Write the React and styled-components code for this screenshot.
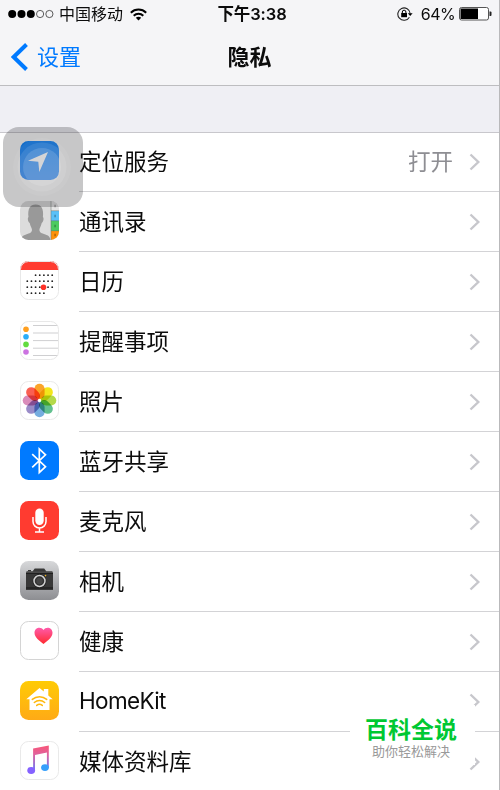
import React from 'react';
import styled, { createGlobalStyle } from 'styled-components';

const GlobalStyle = createGlobalStyle`
  * {
    box-sizing: border-box;
  }

  body {
    margin: 0;
    background: #fff;
    overflow: hidden;
    font-family: Inter, 'Noto Sans CJK SC', sans-serif;
    color: #0c0c0c;
  }

  svg {
    display: block;
  }
`;

const items = [
  { title: '定位服务', icon: 'location', value: '打开' },
  { title: '通讯录', icon: 'contacts' },
  { title: '日历', icon: 'calendar' },
  { title: '提醒事项', icon: 'reminders' },
  { title: '照片', icon: 'photos' },
  { title: '蓝牙共享', icon: 'bluetooth' },
  { title: '麦克风', icon: 'microphone' },
  { title: '相机', icon: 'camera' },
  { title: '健康', icon: 'health' },
  { title: 'HomeKit', icon: 'homekit', latin: true },
  { title: '媒体资料库', icon: 'media' }
];

const petals = [
  '#fba42a', '#f3e61c', '#b4d94a', '#62c08f',
  '#76addf', '#9a8cc8', '#d98cba', '#fa5f52'
];

// first day column, number of days
const weeks = [[2, 5], [0, 7], [0, 7], [0, 5]];

// Every drawing lives on a 39x39 tile
const drawings = {
  location: (
    <>
      <rect width="39" height="39" fill="url(#blue)" />
      <path d="M28 11L8 19.700l10.300 1 1 10.400z" fill="#fff" />
    </>
  ),
  contacts: (
    <>
      <rect width="39" height="39" fill="#dcdcdc" />
      <path
        d="M1 39c.5-3.500 2-4.500 5-5.500 4-1.300 5.800-2 6-4.500.1-1.500-1.500-3.200-2.300-7-1.700-.8-2.500-5-1.200-6C7.500 8 10 3.500 15.700 3.500S23.900 8 22.900 16c1.300 1 .5 5.200-1.200 6-.8 3.800-2.400 5.500-2.300 7 .2 2.500 2 3.200 6 4.500 3 1 4.500 2 5 5.500z"
        fill="#999"
      />
      <rect x="31" width="8" height="10" fill="#e4e4e4" />
      <rect x="31" y="10" width="8" height="10" fill="#5ac1f8" />
      <rect x="31" y="20" width="8" height="10" fill="#4ccb60" />
      <rect x="31" y="30" width="8" height="9" fill="#ff9208" />
      <path d="M31 0v39M31 9.700h8M31 19.700h8M31 29.700h8" stroke="#6a756c" strokeWidth=".5" />
      <path d="M34.200 5h1.800M34.200 15H36M34.200 25H36M34.200 34H36" stroke="#000" strokeOpacity=".25" strokeWidth="2.500" />
    </>
  ),
  calendar: (
    <>
      <rect width="39" height="9" fill="#ff3b30" />
      {weeks.map(([start, count], row) =>
        Array.from({ length: count }, (_, i) => (
          <circle
            key={`${row}-${i}`}
            cx={7.3 + (start + i) * 4.15}
            cy={14.2 + row * 6}
            r=".9"
            fill="#222"
          />
        ))
      )}
      <circle cx="23.500" cy="26.200" r="2.800" fill="#ff3127" />
    </>
  ),
  reminders: (
    <>
      <path
        d="M13 4.500h26M13 12h26M13 19.600h26M13 27.200h26M13 34.500h26"
        stroke="#cfcfd1"
        strokeWidth="1"
      />
      <circle cx="6" cy="8.200" r="2.800" fill="#ff9f1f" />
      <circle cx="6" cy="15.800" r="2.800" fill="#2badf8" />
      <circle cx="6" cy="23.400" r="2.800" fill="#63dc3f" />
      <circle cx="6" cy="31" r="2.800" fill="#cc73e1" />
    </>
  ),
  photos: (
    <g style={{ isolation: 'isolate' }}>
      {petals.map((color, i) => (
        <rect
          key={color}
          x="14.400"
          y="2.700"
          width="10.200"
          height="15.400"
          rx="5.100"
          fill={color}
          transform={`rotate(${i * 45} 19.5 19.5)`}
          style={{ mixBlendMode: 'multiply' }}
        />
      ))}
      <circle cx="19.500" cy="19.500" r="1.400" fill="#fff" />
    </g>
  ),
  bluetooth: (
    <>
      <rect width="39" height="39" fill="#007aff" />
      <path
        d="M12.200 13.200l13.300 12.500-6.200 5.800V8l6.200 5.800-13.300 12.500"
        fill="none"
        stroke="#fff"
        strokeWidth="1.700"
      />
    </>
  ),
  microphone: (
    <>
      <rect width="39" height="39" fill="#ff3b30" />
      <rect x="15.300" y="7.500" width="8.400" height="16.500" rx="4.200" fill="#fff" />
      <path
        d="M13 16v4.500a6.500 6.500 0 0 0 13 0V16M19.500 27v4M15 31h9"
        fill="none"
        stroke="#fff"
        strokeWidth="1.500"
      />
    </>
  ),
  camera: (
    <>
      <rect width="39" height="39" fill="url(#silver)" />
      <path d="M6 12l.7-1.700h6l2-2.800h9.500l2 2.800h6L33 12v17H6z" fill="#383838" />
      <rect x="8" y="9" width="3" height="1.200" fill="#333" />
      <path d="M6 12.200h27M6 27h27" stroke="#151515" />
      <path d="M6 11.200h27" stroke="#777" strokeWidth=".6" />
      <circle cx="19.500" cy="20" r="7" fill="#242424" />
      <circle cx="19.500" cy="20" r="5.500" fill="#333" stroke="#d2d2d2" strokeWidth="1.500" />
      <circle cx="19.500" cy="20" r="3.200" fill="#454545" />
      <circle cx="25.500" cy="14.600" r=".8" fill="#f2b51c" />
    </>
  ),
  health: (
    <path
      d="M23.500 23c-4-3-9-6.500-9-11.200 0-5.500 6.500-6.800 9-2.800 2.500-4 9-2.700 9 2.800 0 4.700-5 8.200-9 11.200z"
      fill="url(#pink)"
    />
  ),
  homekit: (
    <>
      <rect width="39" height="39" fill="url(#amber)" />
      <path d="M6.300 18.200L19.500 7l4.300 3.600V8h4.500v6.500l4.400 3.700H29.500V29h-20V18.200z" fill="#fff" />
      <g fill="none" stroke="#ffb90e" strokeWidth="1.500" strokeLinecap="round">
        <path d="M12.300 18.400c4.100-3.700 10.300-3.700 14.400 0" />
        <path d="M14.300 21.500c3-2.700 7.400-2.700 10.400 0" />
        <path d="M16.700 24.400c1.700-1.400 3.900-1.400 5.600 0" />
      </g>
    </>
  ),
  media: (
    <>
      <path
        d="M13.100 7.600L28.800 4.600V26.500h-1.900V11.600L15 14v16h-1.900z"
        fill="url(#music)"
      />
      <ellipse cx="11.200" cy="29.500" rx="3.900" ry="3.400" fill="#8562ff" />
      <ellipse cx="25" cy="26.600" rx="3.900" ry="3.400" fill="#369ffb" />
    </>
  )
};

const outlines = {
  calendar: '#e8e8e8',
  reminders: '#e8e8e8',
  photos: '#e9e9e9',
  health: '#d4d4d4',
  media: '#e9e9e9'
};

const Gradient = ({ id, from, to }) => (
  <linearGradient id={id} x1="0" y1="0" x2="0" y2="1">
    <stop stopColor={from} />
    <stop offset="1" stopColor={to} />
  </linearGradient>
);

const AppIcon = ({ name }) => (
  <Tile width="39" height="39" viewBox="0 0 39 39">
    <defs>
      <clipPath id="tile">
        <rect width="39" height="39" rx="8.500" />
      </clipPath>
      <Gradient id="blue" from="#0a84ff" to="#2488ff" />
      <Gradient id="silver" from="#d7d8da" to="#8d8e92" />
      <Gradient id="pink" from="#ff5bab" to="#ff2b2f" />
      <Gradient id="amber" from="#ffcb05" to="#ffaa16" />
      <linearGradient id="music" gradientUnits="userSpaceOnUse" x1="20" y1="4" x2="20" y2="31">
        <stop stopColor="#fb5573" />
        <stop offset=".35" stopColor="#e0629f" />
        <stop offset="1" stopColor="#5e7bff" />
      </linearGradient>
    </defs>
    <g clipPath="url(#tile)">{drawings[name]}</g>
    {outlines[name] && (
      <rect
        x=".5"
        y=".5"
        width="38"
        height="38"
        rx="8"
        fill="none"
        stroke={outlines[name]}
      />
    )}
  </Tile>
);

const App = () => {
  return (
    <Screen>
      <GlobalStyle />
      <Header>
        <StatusBar>
          <Carrier>
            <svg width="46" height="10" viewBox="0 0 46 10">
              {[0, 1, 2, 3, 4].map(i => (
                <circle
                  key={i}
                  cx={4.2 + i * 9.3}
                  cy="5"
                  r={i < 3 ? 4 : 3.6}
                  fill={i < 3 ? '#000' : 'none'}
                  stroke={i < 3 ? 'none' : '#333'}
                  strokeWidth=".8"
                />
              ))}
            </svg>
            <span>中国移动</span>
            <svg width="17" height="13" viewBox="0 0 17 13">
              <g fill="none" stroke="#000" strokeWidth="2">
                <path d="M.8 4.700c4.300-4.200 11.100-4.200 15.400 0" />
                <path d="M3.700 7.700c2.700-2.600 6.900-2.600 9.600 0" />
              </g>
              <path d="M5.800 9.800c1.500-1.400 3.900-1.400 5.400 0L8.500 12.500z" />
            </svg>
          </Carrier>
          <Clock>下午3:38</Clock>
          <Power>
            <svg width="16" height="14" viewBox="0 0 16 14">
              <path
                d="M12.400 10.200A6.200 6.200 0 1 1 13.200 6.500"
                fill="none"
                stroke="#222"
                strokeWidth="1.100"
              />
              <path d="M10.800 6.300h4.800L13.200 9z" />
              <rect x="4.200" y="6" width="5.800" height="4.200" />
              <path d="M5.300 6.200V5a1.800 1.800 0 0 1 3.600 0v1.200" fill="none" stroke="#000" />
            </svg>
            <Percent>64%</Percent>
            <svg width="33" height="14" viewBox="0 0 33 14">
              <rect x=".5" y=".5" width="29" height="12.500" rx="2" fill="#fff" stroke="#555" />
              <rect x="1.500" y="1.500" width="17.500" height="10.500" />
              <path d="M30.500 4.500h1q1 0 1 1v2.500q0 1-1 1h-1z" fill="#222" />
            </svg>
          </Power>
        </StatusBar>
        <NavBar>
          <Back>
            <svg width="17" height="28" viewBox="0 0 17 28">
              <path d="M15.500 1.500L2.700 14l12.800 12.500" fill="none" stroke="#007aff" strokeWidth="4" />
            </svg>
            <span>设置</span>
          </Back>
          <Title>隐私</Title>
        </NavBar>
      </Header>
      <List>
        {items.map(item => (
          <Row key={item.title}>
            <AppIcon name={item.icon} />
            <Cell>
              <Label $latin={item.latin}>{item.title}</Label>
              {item.value && <Value>{item.value}</Value>}
              <svg width="12" height="18" viewBox="0 0 12 18">
                <path d="M1.500 1.500L9.300 9l-7.800 7.500" fill="none" stroke="#c7c7cc" strokeWidth="2.400" />
              </svg>
            </Cell>
          </Row>
        ))}
      </List>
      <AssistiveTouch>
        <svg width="80" height="80" viewBox="0 0 80 80" fill="#fff">
          <circle cx="39" cy="40" r="29" fillOpacity=".06" />
          <circle cx="39" cy="40" r="24.500" fillOpacity=".1" />
          <circle cx="39" cy="40" r="19" fillOpacity=".14" />
        </svg>
      </AssistiveTouch>
      <Badge>
        <BadgeTitle>百科全说</BadgeTitle>
        <BadgeText>助你轻松解决</BadgeText>
      </Badge>
    </Screen>
  );
};

export default App;

const Screen = styled.div`
  position: relative;
  width: 500px;
  height: 790px;
  overflow: hidden;
  background: #fff;
  border-right: 1px solid #b9b9bb;
`;

const Header = styled.header`
  height: 86px;
  background: #f5f5f7;
  border-bottom: 1px solid #bdbdc0;
`;

const StatusBar = styled.div`
  display: grid;
  grid-template-columns: 1fr auto 1fr;
  align-items: center;
  height: 28px;
  padding: 0 7px 0 8px;
  font-size: 16px;
  line-height: 28px;
`;

const Carrier = styled.div`
  display: flex;
  align-items: center;
  gap: 5px;

  span {
    margin-right: 2px;
  }
`;

const Clock = styled.div`
  font-size: 16.5px;
  font-weight: 600;
  letter-spacing: -0.1px;
  padding-left: 4px;
`;

const Power = styled.div`
  display: flex;
  align-items: center;
  justify-content: flex-end;
`;

const Percent = styled.span`
  margin: 0 4px 0 8px;
  letter-spacing: -0.6px;
`;

const NavBar = styled.nav`
  display: grid;
  grid-template-columns: 1fr auto 1fr;
  align-items: center;
  height: 57px;
  padding: 0 11px;
  font-size: 22px;
`;

const Back = styled.div`
  display: flex;
  align-items: center;
  gap: 9px;
  color: #007aff;

  span {
    padding-bottom: 4px;
  }
`;

const Title = styled.div`
  padding-bottom: 4px;
  font-weight: 600;
`;

const List = styled.main`
  padding-top: 46px;
  background: #efeff4;
`;

const Row = styled.div`
  display: flex;
  align-items: center;
  height: 60px;
  padding-left: 20px;
  background: #fff;

  &:first-child {
    border-top: 1px solid #c8c7cc;
  }
`;

const Tile = styled.svg`
  flex: none;
  margin-right: 20px;
  margin-bottom: 4px;
`;

const Cell = styled.div`
  display: flex;
  flex: 1;
  align-items: center;
  height: 100%;
  padding-right: 18px;
  border-bottom: 1px solid #d3d3d6;
  font-size: 22.5px;
`;

const Label = styled.span`
  flex: 1;
  padding-bottom: ${props => (props.$latin ? '2px' : '4px')};
  letter-spacing: ${props => (props.$latin ? '-0.65px' : '0')};
`;

const Value = styled.span`
  margin-right: 16px;
  padding-bottom: 4px;
  color: #8e8e93;
`;

const AssistiveTouch = styled.div`
  position: absolute;
  top: 127px;
  left: 3px;
  width: 80px;
  height: 80px;
  border-radius: 16px;
  background: rgba(40, 40, 42, 0.26);
`;

const Badge = styled.div`
  position: absolute;
  top: 705px;
  left: 350px;
  display: flex;
  flex-direction: column;
  align-items: center;
  width: 125px;
  height: 60px;
  padding: 11px 3px 0 0;
  background: #fff;
`;

const BadgeTitle = styled.div`
  color: #00c832;
  font-size: 23px;
  font-weight: 600;
  line-height: 28px;
`;

const BadgeText = styled.div`
  color: #999;
  font-size: 13px;
  line-height: 14px;
`;
